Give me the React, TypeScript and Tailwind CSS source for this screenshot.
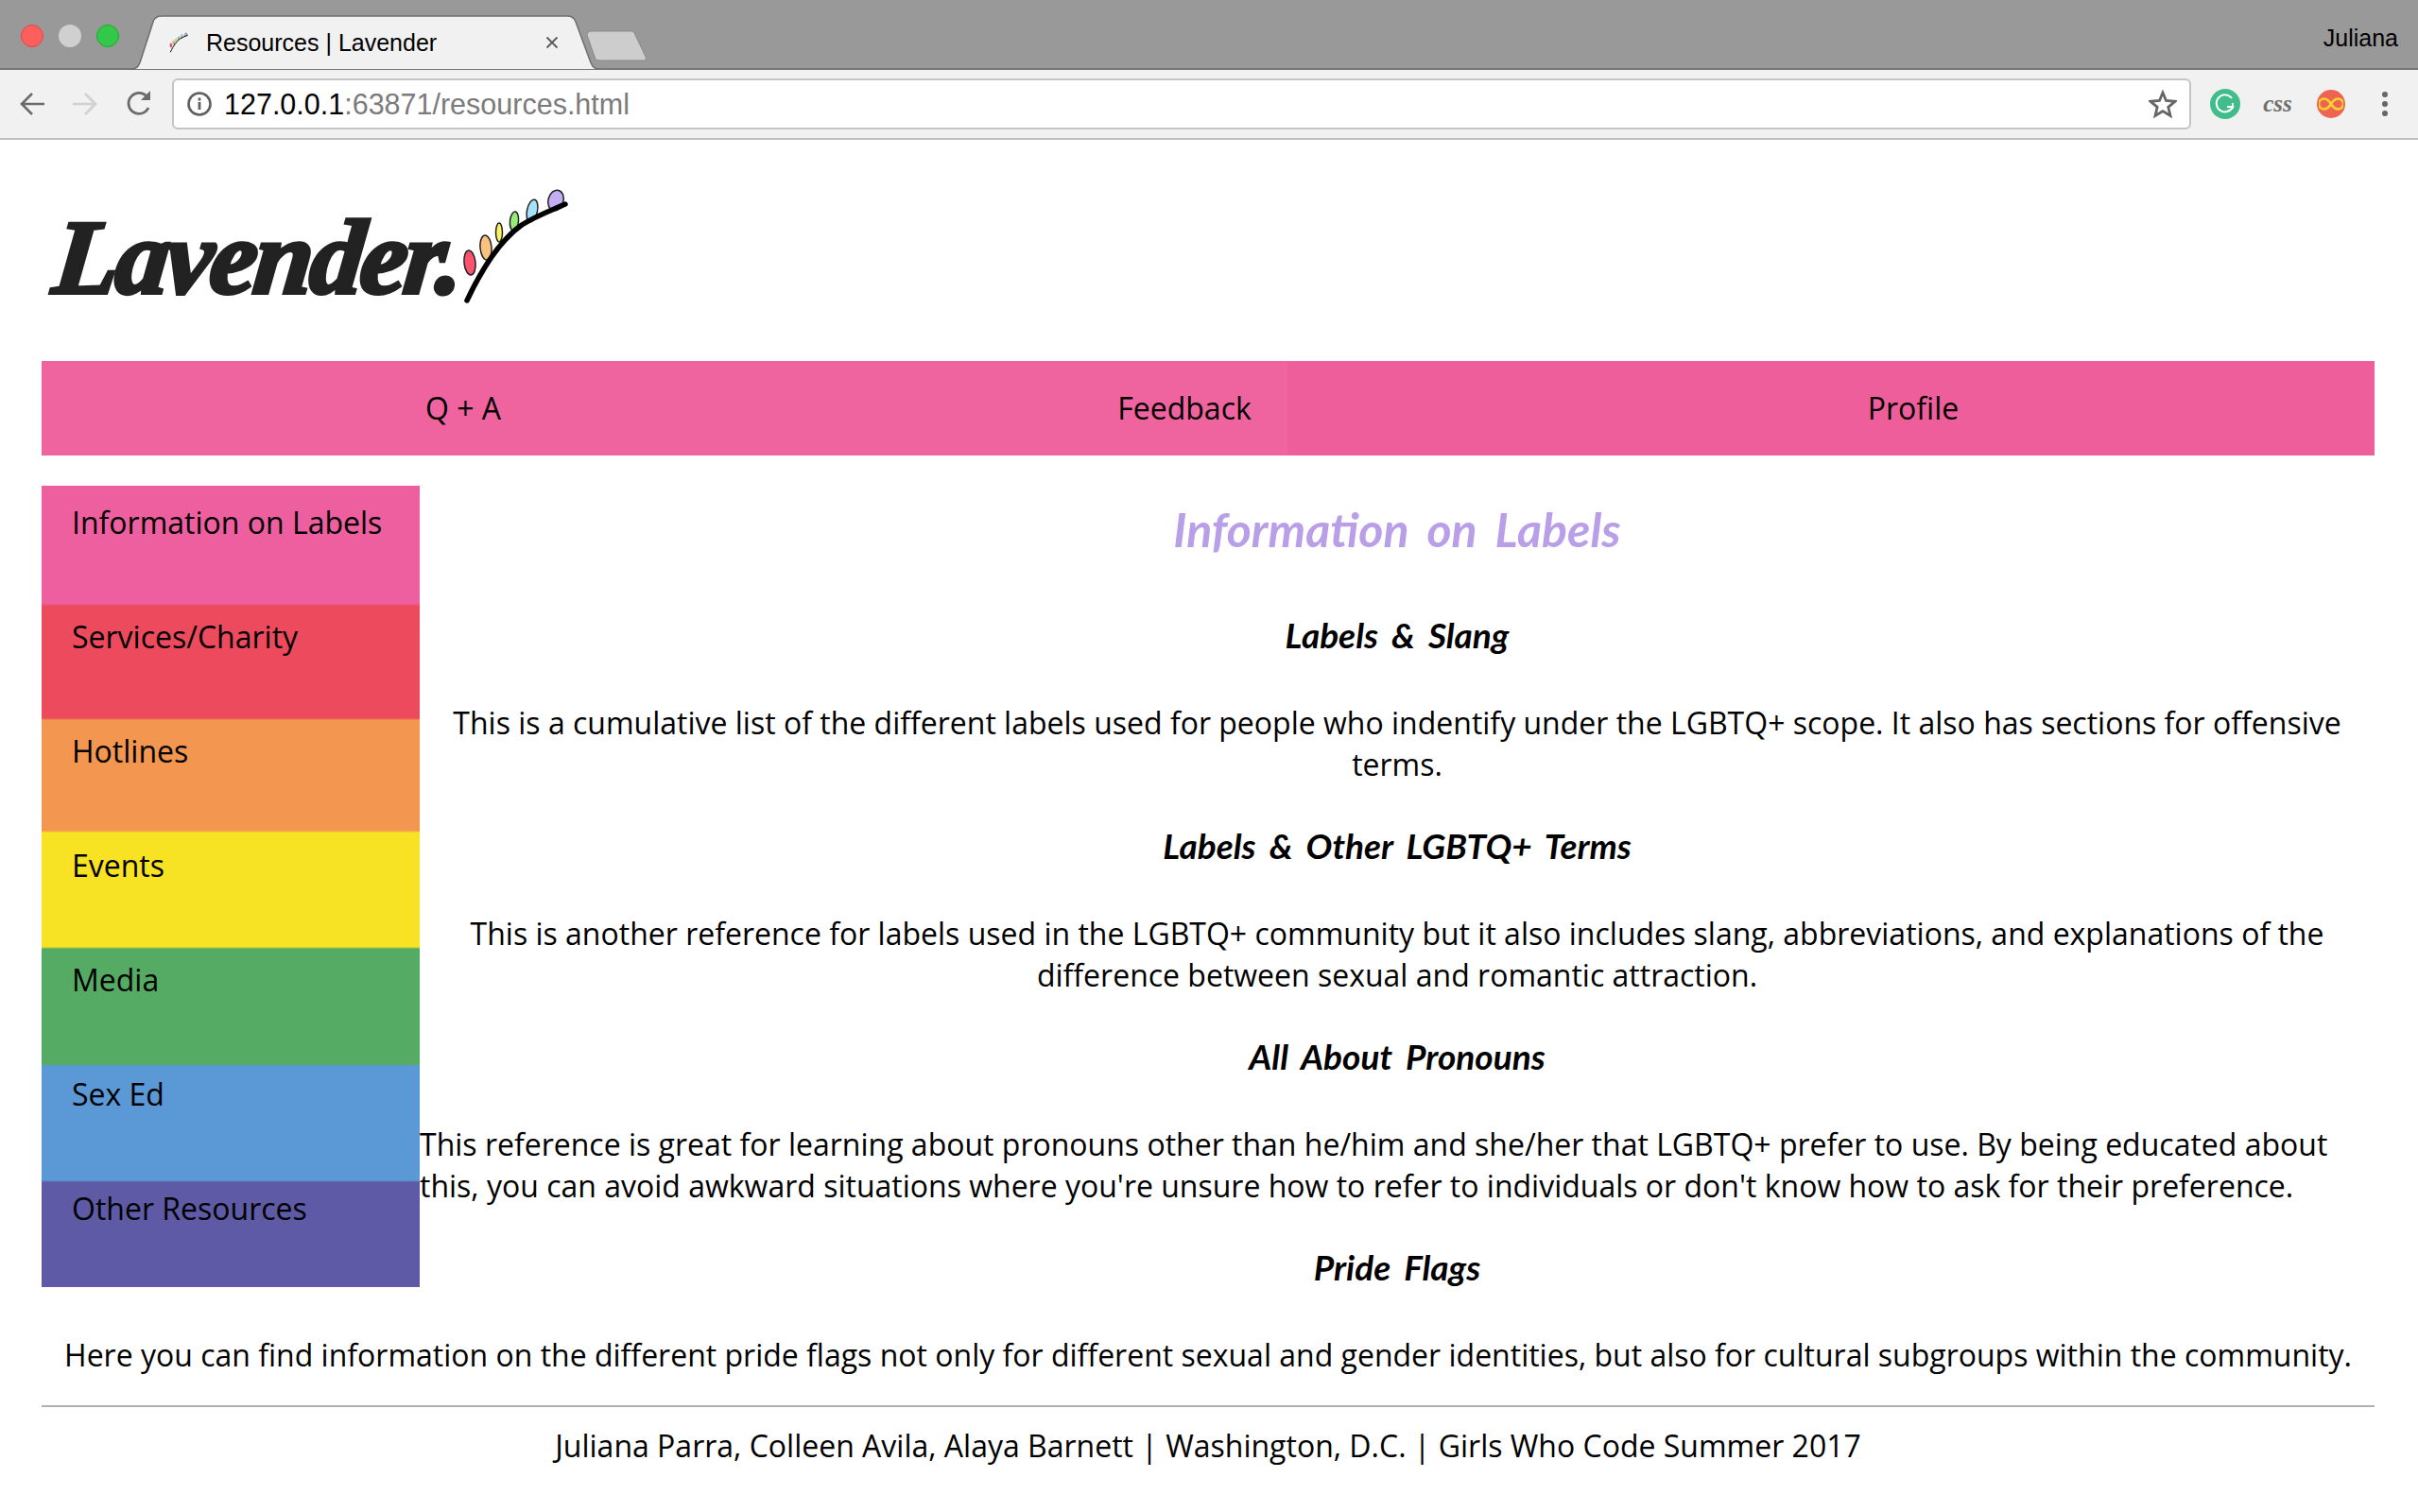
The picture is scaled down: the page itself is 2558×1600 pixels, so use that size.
const sans = { fontFamily: '"Open Sans", sans-serif' };

const SIDE_LINKS = ['Information on Labels', 'Services/Charity', 'Hotlines', 'Events', 'Media', 'Sex Ed', 'Other Resources'];

const PETALS = [
  { cx: 7, cy: 60, rx: 6, ry: 13, rot: -6, fill: '#f9536f' },
  { cx: 24, cy: 44, rx: 6, ry: 13, rot: -5, fill: '#fbc27f' },
  { cx: 38, cy: 28, rx: 3.5, ry: 10, rot: 0, fill: '#fbf062' },
  { cx: 54, cy: 16, rx: 4.5, ry: 10, rot: 6, fill: '#95ec76' },
  { cx: 73, cy: 5, rx: 5.5, ry: 12, rot: 12, fill: '#a4e2fa' },
  { cx: 98, cy: -6, rx: 8, ry: 11, rot: 16, fill: '#c3aef4' },
];

function Brush({ className }: { className?: string }) {
  return (
    <svg className={className} viewBox="-4 -20 116 125" fill="none">
      {PETALS.map((p) => (
        <ellipse
          key={p.fill}
          cx={p.cx}
          cy={p.cy}
          rx={p.rx}
          ry={p.ry}
          fill={p.fill}
          stroke="#222"
          strokeWidth="1.5"
          transform={`rotate(${p.rot} ${p.cx} ${p.cy})`}
        />
      ))}
      <path d="M4 100 C 22 62, 42 34, 62 20 C 78 10, 90 6, 108 -2" stroke="#000" strokeWidth="5.5" strokeLinecap="round" />
    </svg>
  );
}

function TabStrip() {
  return (
    <div className="h-[74px] bg-[#999999] border-b-2 border-[#777777] flex items-start relative">
      <div className="flex gap-[16px] pl-[22px] pt-[26px]">
        <span className="w-[24px] h-[24px] rounded-full bg-[#fc605c] border border-[#df4744]" />
        <span className="w-[24px] h-[24px] rounded-full bg-[#d0d0d0]" />
        <span className="w-[24px] h-[24px] rounded-full bg-[#34c84a] border border-[#1aab29]" />
      </div>
      {/* tab shape */}
      <svg className="absolute left-[138px] top-[16px]" width="497" height="58" viewBox="0 0 490 58" preserveAspectRatio="none">
        <path d="M1 57 C 6 57 8 55 10 50 L 24 6 C 26 2 28 1 32 1 L 456 1 C 460 1 462 2 464 6 L 480 50 C 482 55 484 57 489 57" fill="#f1f1f1" stroke="#6f6f6f" strokeWidth="1.5" />
      </svg>
      <svg className="absolute left-[618px] top-[32px]" width="68" height="34" viewBox="0 0 68 34">
        <path d="M3 5 C 3 2 5 1 8 1 L 48 1 C 52 1 53 2 54 5 L 65 28 C 66 31 65 32 62 32 L 16 32 C 13 32 12 31 11 28 Z" fill="#cdcdcd" stroke="#8a8a8a" strokeWidth="1" />
      </svg>
      <Brush className="absolute left-[179px] top-[31px] w-[20px] h-[28px]" />
      <span className="absolute left-[218px] top-[29px] text-[25px] leading-[32px] text-black" style={{ fontFamily: '"Liberation Sans", sans-serif' }}>
        Resources | Lavender
      </span>
      <svg className="absolute left-[577px] top-[38px]" width="14" height="14" viewBox="0 0 14 14" stroke="#5a5a5a" strokeWidth="1.8">
        <path d="M1.5 1.5 L12.5 12.5 M12.5 1.5 L1.5 12.5" />
      </svg>
      <span className="absolute right-[21px] top-[24px] text-[25px] leading-[32px] text-black" style={{ fontFamily: '"Liberation Sans", sans-serif' }}>
        Juliana
      </span>
    </div>
  );
}

function Toolbar() {
  return (
    <div className="h-[74px] bg-[#f1f1f1] border-b-2 border-[#bdbdbd] flex items-center pl-[20px] pr-[26px]">
      <svg width="28" height="28" viewBox="0 0 28 28" fill="none" stroke="#6b6b6b" strokeWidth="2.6">
        <path d="M27 14 H3 M14 3 L3 14 L14 25" />
      </svg>
      <svg className="ml-[28px]" width="28" height="28" viewBox="0 0 28 28" fill="none" stroke="#d0d0d0" strokeWidth="2.6">
        <path d="M1 14 H25 M14 3 L25 14 L14 25" />
      </svg>
      <svg className="ml-[28px]" width="30" height="30" viewBox="0 0 30 30" fill="none" stroke="#6b6b6b" strokeWidth="2.8">
        <path d="M25 19 A 11 11 0 1 1 24 8" />
        <path d="M27 1 V11 H17 Z" fill="#6b6b6b" stroke="none" />
      </svg>
      <div className="ml-[20px] w-[2136px] h-[54px] bg-white border-2 border-[#c4c4c4] rounded-[6px] flex items-center pl-[13px] pr-[13px]">
        <svg width="28" height="28" viewBox="0 0 28 28" fill="none">
          <circle cx="14" cy="14" r="11.5" stroke="#5f5f5f" strokeWidth="2.6" />
          <rect x="12.6" y="12" width="2.8" height="8" fill="#5f5f5f" />
          <rect x="12.6" y="7.5" width="2.8" height="3" fill="#5f5f5f" />
        </svg>
        <span className="ml-[12px] text-[30.5px] leading-[34px] text-black" style={{ fontFamily: '"Liberation Sans", sans-serif' }}>
          127.0.0.1<span className="text-[#7b7b7b]">:63871/resources.html</span>
        </span>
        <svg className="ml-auto" width="30" height="30" viewBox="0 0 30 30" fill="none" stroke="#666666" strokeWidth="2.8" strokeLinejoin="miter">
          <path d="M15 3 L18.5 11.5 L28 12.3 L20.8 18.3 L23 27.5 L15 22.6 L7 27.5 L9.2 18.3 L2 12.3 L11.5 11.5 Z" />
        </svg>
      </div>
      <div className="ml-[20px] w-[32px] h-[32px] rounded-full bg-[#41bd8c] flex items-center justify-center">
        <svg width="22" height="22" viewBox="0 0 22 22" fill="none" stroke="#ffffff" strokeWidth="2">
          <path d="M18 5 A 9 9 0 1 0 19 14 H13" />
          <path d="M19 10 V16" />
        </svg>
      </div>
      <span className="ml-[22px] w-[35px] text-center text-[25px] leading-[24px] font-bold italic text-[#6f6f6f]" style={{ fontFamily: '"Liberation Serif", serif' }}>
        css
      </span>
      <div className="ml-[24px] w-[30px] h-[30px] rounded-full bg-[#ef6450] flex items-center justify-center">
        <svg width="26" height="14" viewBox="0 0 26 14" fill="none" stroke="#f6d32f" strokeWidth="2.6">
          <path d="M13 7 C 10 2, 7 1.5, 5.5 1.5 A 5.5 5.5 0 0 0 5.5 12.5 C 7 12.5, 10 12, 13 7 C 16 2, 19 1.5, 20.5 1.5 A 5.5 5.5 0 0 1 20.5 12.5 C 19 12.5, 16 12, 13 7 Z" />
        </svg>
      </div>
      <div className="ml-[39px] flex flex-col gap-[4px]">
        <span className="w-[6px] h-[6px] rounded-full bg-[#666666]" />
        <span className="w-[6px] h-[6px] rounded-full bg-[#666666]" />
        <span className="w-[6px] h-[6px] rounded-full bg-[#666666]" />
      </div>
    </div>
  );
}

function Logo() {
  return (
    <div className="h-[234px] flex items-start pl-[14px] pt-[74px]">
      <span
        className="inline-block -skew-x-6 text-[112px] leading-[100px] font-bold italic tracking-[-3px] text-[#222222] [-webkit-text-stroke:4px_#222222]"
        style={{ fontFamily: '"Liberation Serif", serif' }}
      >
        Lavender.
      </span>
      <Brush className="-ml-[2px] -mt-[24px] w-[116px] h-[125px]" />
    </div>
  );
}

function Heading({ children }: { children: string }) {
  return (
    <h2
      className="mt-[42px] mb-[49px] text-center text-[37px] leading-[44px] font-bold italic text-black"
      style={{ fontFamily: 'Lato, sans-serif', wordSpacing: '6px' }}
    >
      {children}
    </h2>
  );
}

export default function App() {
  return (
    <div className="min-h-screen bg-white text-black text-[32px] leading-[44px]" style={sans}>
      <TabStrip />
      <Toolbar />
      <div className="pl-[44px] pr-[46px]">
        <Logo />
        <nav className="h-[100px] bg-[linear-gradient(90deg,#ef639f_1318px,#ee5e9b_1318px)] grid grid-cols-[892px_634px_1fr] items-center text-center">
          <a>Q + A</a>
          <a>Feedback</a>
          <a className="pr-[34px]">Profile</a>
        </nav>
        <div className="pt-[32px]">
          {/* rainbow is one background behind evenly spaced links */}
          <aside className="float-left w-[400px] h-[848px] bg-[linear-gradient(180deg,#ee5f9f_125px,#ec4a5d_127px,#ee4a5d_246px,#f29650_248px,#f29650_365px,#f8e224_367px,#f8e224_488px,#55ab64_490px,#55ab64_612px,#5a98d6_614px,#5a98d6_735px,#5f5aa6_737px)]">
            {SIDE_LINKS.map((label) => (
              <div key={label} className="h-[121px] pl-[32px] pt-[17px]">
                {label}
              </div>
            ))}
          </aside>
          <h1
            className="pb-[2px] text-center text-[50px] leading-[92px] font-bold italic text-[#b89fe8]"
            style={{ fontFamily: 'Lato, sans-serif', wordSpacing: '8px' }}
          >
            Information on Labels
          </h1>
          <Heading>Labels &amp; Slang</Heading>
          <p className="text-center">
            This is a cumulative list of the different labels used for people who indentify under the LGBTQ+ scope. It also has sections for offensive terms.
          </p>
          <Heading>Labels &amp; Other LGBTQ+ Terms</Heading>
          <p className="text-center">
            This is another reference for labels used in the LGBTQ+ community but it also includes slang, abbreviations, and explanations of the difference between sexual and romantic attraction.
          </p>
          <Heading>All About Pronouns</Heading>
          <p>
            This reference is great for learning about pronouns other than he/him and she/her that LGBTQ+ prefer to use. By being educated about this, you can avoid awkward situations where you're unsure how to refer to individuals or don't know how to ask for their preference.
          </p>
          <Heading>Pride Flags</Heading>
          <p className="text-center clear-left">
            Here you can find information on the different pride flags not only for different sexual and gender identities, but also for cultural subgroups within the community.
          </p>
        </div>
        <hr className="mt-[31px] border-t-2 border-[#b0b0b0]" />
        <footer className="mt-[19px] text-center">
          Juliana Parra, Colleen Avila, Alaya Barnett | Washington, D.C. | Girls Who Code Summer 2017
        </footer>
      </div>
    </div>
  );
}
